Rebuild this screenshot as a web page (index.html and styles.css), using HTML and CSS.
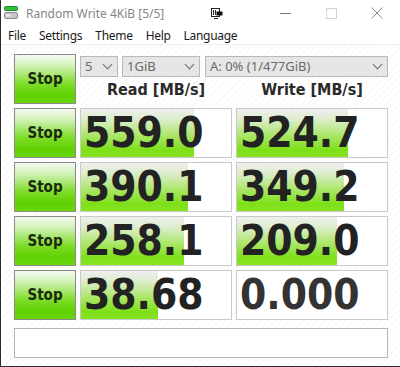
FILE: index.html
```html
<!doctype html>
<html>
<head>
<meta charset="utf-8">
<title>Random Write 4KiB [5/5]</title>
<link rel="stylesheet" href="styles.css">
</head>
<body>
<div class="window">
  <div class="titlebar">
    <svg class="app-icon" width="14" height="14" viewBox="0 0 14 14">
      <rect x="0.5" y="0.5" width="13" height="4" rx="1" fill="#2fbf3a" stroke="#1e8a27"/>
      <rect x="0.5" y="6.5" width="13" height="6" rx="1.5" fill="#c9c9c9" stroke="#8a8a8a"/>
      <rect x="2" y="8.5" width="4" height="2" fill="#f4f4f4"/>
    </svg>
    <span class="title">Random Write 4KiB [5/5]</span>
    <svg class="pin" width="12" height="11" viewBox="0 0 12 11">
      <rect x="0.5" y="0.5" width="8" height="8" fill="none" stroke="#222"/>
      <line x1="2.5" y1="2" x2="2.5" y2="7" stroke="#222"/>
      <line x1="4.5" y1="2" x2="4.5" y2="7" stroke="#222"/>
      <rect x="5.5" y="3.5" width="6" height="4" fill="#111"/>
      <line x1="3" y1="10.5" x2="7" y2="10.5" stroke="#222"/>
    </svg>
    <div class="win-btns">
      <span class="wb"><svg width="11" height="11" viewBox="0 0 11 11"><line x1="0" y1="5.5" x2="11" y2="5.5" stroke="#777"/></svg></span>
      <span class="wb"><svg width="11" height="11" viewBox="0 0 11 11"><rect x="0.5" y="0.5" width="10" height="10" fill="none" stroke="#d2d2d2"/></svg></span>
      <span class="wb"><svg width="12" height="12" viewBox="0 0 12 12"><path d="M0.5 0.5 L11.5 11.5 M11.5 0.5 L0.5 11.5" stroke="#8a8a8a"/></svg></span>
    </div>
  </div>

  <div class="menubar">
    <span>File</span>
    <span>Settings</span>
    <span>Theme</span>
    <span>Help</span>
    <span>Language</span>
  </div>

  <div class="main">
    <div class="grid">
      <div class="stop">Stop</div>
      <div class="head">
        <div class="selects">
          <div class="sel sel-count">5<i></i></div>
          <div class="sel sel-size">1GiB<i></i></div>
          <div class="sel sel-drive">A: 0% (1/477GiB)<i></i></div>
        </div>
        <div class="labels">
          <span>Read [MB/s]</span>
          <span>Write [MB/s]</span>
        </div>
      </div>

      <div class="stop">Stop</div>
      <div class="meter"><div class="bar" style="width:113px"></div><span>559.0</span></div>
      <div class="meter"><div class="bar" style="width:111px"></div><span>524.7</span></div>

      <div class="stop">Stop</div>
      <div class="meter"><div class="bar" style="width:107px"></div><span>390.1</span></div>
      <div class="meter"><div class="bar" style="width:107px"></div><span>349.2</span></div>

      <div class="stop">Stop</div>
      <div class="meter"><div class="bar" style="width:103px"></div><span>258.1</span></div>
      <div class="meter"><div class="bar" style="width:100px"></div><span>209.0</span></div>

      <div class="stop">Stop</div>
      <div class="meter"><div class="bar" style="width:77px"></div><span>38.68</span></div>
      <div class="meter"><span class="zero">0.000</span></div>
    </div>
    <div class="status"></div>
  </div>
</div>
</body>
</html>
```

FILE: styles.css
```css
body { margin: 0; background: #fff; }
.window { width: 399px; height: 366px; border-left: 1px solid #2b2b2b; border-bottom: 1px solid #2b2b2b; background: #fff; font-family: "Noto Sans", sans-serif; overflow: hidden; }

.titlebar { height: 26px; display: flex; align-items: center; padding-left: 3px; background: #fff; }
.app-icon { margin-right: 8px; }
.title { font-size: 12px; color: #858585; width: 185px; }
.win-btns { display: flex; margin-left: auto; }
.wb { width: 46px; height: 26px; display: flex; align-items: center; justify-content: center; }

.menubar { height: 18px; display: flex; align-items: center; padding-left: 7px; font-size: 12px; letter-spacing: -0.3px; color: #1a1a1a; border-bottom: 1px solid #f0f0f0; }
.menubar span { margin-right: 13px; }

.main { padding: 9px 0 0 13px; height: 312px; background: repeating-linear-gradient(135deg, #fff 0 3px, #fafafa 3px 5px); }
.grid { display: grid; grid-template-columns: 62px 152px 152px; grid-auto-rows: 50px; gap: 4px; }

.stop { box-sizing: border-box; border: 1px solid #8a8a8a; background: linear-gradient(#f4faf1, #d2f2b8 22%, #7edc28 60%, #5ed000 85%, #6ad80c); display: flex; align-items: center; justify-content: center; font: bold 15px "DejaVu Sans Condensed", "DejaVu Sans", sans-serif; color: #1b2a0e; }

.head { grid-column: 2 / 4; display: flex; flex-direction: column; }
.selects { display: flex; margin-top: 2px; gap: 4px; }
.sel { box-sizing: border-box; height: 21px; border: 1px solid #b9b9b9; background: #e6e6e6; color: #6a6a6a; font-size: 13px; line-height: 19px; padding-left: 4px; position: relative; }
.sel i { position: absolute; right: 6px; top: 4px; width: 6px; height: 6px; border-right: 1.5px solid #6a6a6a; border-bottom: 1.5px solid #6a6a6a; transform: rotate(45deg); }
.sel-count { width: 38px; }
.sel-size { width: 78px; }
.sel-drive { width: 183px; margin-left: 1px; }
.labels { display: grid; grid-template-columns: 152px 152px; gap: 4px; margin-top: 3px; }
.labels span { text-align: center; font: bold 16px "DejaVu Sans Condensed", "DejaVu Sans", sans-serif; color: #2a2a2a; }

.meter { box-sizing: border-box; position: relative; border: 1px solid #c9c9c9; background: #fff; display: flex; align-items: center; overflow: hidden; }
.bar { position: absolute; left: 0; top: 0; bottom: 0; background: linear-gradient(#efefef, #dcedcc 22%, #ace66a 55%, #7ee018 85%, #88e324); }
.meter span { position: relative; padding-left: 3px; font: bold 42px/1 "DejaVu Sans Condensed", "DejaVu Sans", sans-serif; color: #222; }
.meter .zero { color: #333; }

.status { box-sizing: border-box; width: 374px; height: 30px; margin-top: 8px; border: 1px solid #b5b5b5; background: #fff; }
```
